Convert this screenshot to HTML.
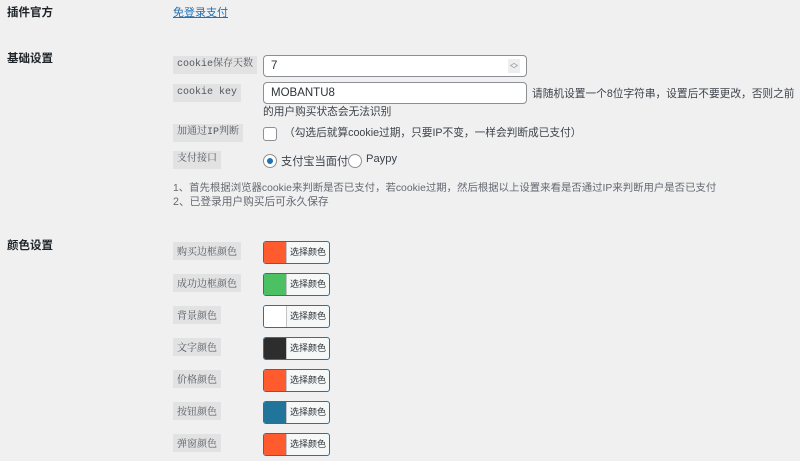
<!DOCTYPE html>
<html><head><meta charset="utf-8"><style>
body{margin:0;width:800px;height:461px;background:#f0f0f1;font-family:"Liberation Sans","Noto Sans CJK SC",sans-serif;color:#3c434a;font-size:10.7px;position:relative;overflow:hidden}
.a{position:absolute;white-space:nowrap}
.h{font-weight:bold;color:#1d2327;font-size:11.5px}
.c{background:#e2e2e3;font-family:"Liberation Mono","Noto Serif CJK SC",monospace;font-size:10px;padding:0 4px;height:18px;line-height:18px;color:#50575e}
.in{background:#fff;border:1px solid #8c8f94;border-radius:4px;line-height:20px;padding-left:7px;box-sizing:border-box;height:22px;color:#2c3338;font-size:11.5px}
.cb{width:67px;height:23px;border:1px solid #2271b1;border-radius:3px;box-sizing:border-box;background:#f6f7f7;overflow:hidden;display:flex}
.cb i{width:22px;height:100%;display:block}
.cb span{flex:1;font-size:9px;line-height:21px;text-align:center;color:#2c3338;border-left:1px solid #c3c4c7}
</style></head><body>
<div class="a h" style="left:7px;top:4px">插件官方</div>
<div class="a" style="left:173px;top:4px;color:#2271b1;text-decoration:underline;font-size:11px">免登录支付</div>
<div class="a h" style="left:7px;top:50px">基础设置</div>
<div class="a c" style="left:173px;top:56px">cookie保存天数</div>
<div class="a in" style="left:263px;top:55px;width:264px">7<span style="position:absolute;right:6px;top:3px;width:12px;height:14px;background:#eee;font-size:8px;line-height:7px;text-align:center;color:#888">︿<br>﹀</span></div>
<div class="a c" style="left:173px;top:84px">cookie key</div>
<div class="a in" style="left:263px;top:82px;width:264px">MOBANTU8</div>
<div class="a" style="left:532px;top:86px">请随机设置一个8位字符串，设置后不要更改，否则之前</div>
<div class="a" style="left:263px;top:104px">的用户购买状态会无法识别</div>
<div class="a c" style="left:173px;top:124px">加通过IP判断</div>
<div class="a" style="left:263px;top:127px;width:12px;height:12px;border:1px solid #8c8f94;border-radius:3px;background:#fff"></div>
<div class="a" style="left:284px;top:125px">（勾选后就算cookie过期，只要IP不变，一样会判断成已支付）</div>
<div class="a c" style="left:173px;top:151px">支付接口</div>
<div class="a" style="left:263px;top:154px;width:12px;height:12px;border:1px solid #8c8f94;border-radius:50%;background:#fff"><div style="width:6px;height:6px;border-radius:50%;background:#2271b1;margin:3px"></div></div>
<div class="a" style="left:281px;top:153px;font-size:11.2px">支付宝当面付</div>
<div class="a" style="left:348px;top:154px;width:12px;height:12px;border:1px solid #8c8f94;border-radius:50%;background:#fff"></div>
<div class="a" style="left:366px;top:153px;font-size:11.2px">Paypy</div>
<div class="a" style="left:173px;top:179px;color:#646970;font-size:10.4px">1、首先根据浏览器cookie来判断是否已支付，若cookie过期，然后根据以上设置来看是否通过IP来判断用户是否已支付</div>
<div class="a" style="left:173px;top:194px;color:#646970">2、已登录用户购买后可永久保存</div>
<div class="a h" style="left:7px;top:237px">颜色设置</div>
<div class="a c" style="left:173px;top:242px;font-family:'Noto Serif CJK SC',serif">购买边框颜色</div>
<div class="a cb" style="left:263px;top:241px"><i style="background:#ff5b2e"></i><span>选择颜色</span></div>
<div class="a c" style="left:173px;top:274px;font-family:'Noto Serif CJK SC',serif">成功边框颜色</div>
<div class="a cb" style="left:263px;top:273px"><i style="background:#4cc164"></i><span>选择颜色</span></div>
<div class="a c" style="left:173px;top:306px;font-family:'Noto Serif CJK SC',serif">背景颜色</div>
<div class="a cb" style="left:263px;top:305px"><i style="background:#fff"></i><span>选择颜色</span></div>
<div class="a c" style="left:173px;top:338px;font-family:'Noto Serif CJK SC',serif">文字颜色</div>
<div class="a cb" style="left:263px;top:337px"><i style="background:#2d2d2d"></i><span>选择颜色</span></div>
<div class="a c" style="left:173px;top:370px;font-family:'Noto Serif CJK SC',serif">价格颜色</div>
<div class="a cb" style="left:263px;top:369px"><i style="background:#ff5b2e"></i><span>选择颜色</span></div>
<div class="a c" style="left:173px;top:402px;font-family:'Noto Serif CJK SC',serif">按钮颜色</div>
<div class="a cb" style="left:263px;top:401px"><i style="background:#21759b"></i><span>选择颜色</span></div>
<div class="a c" style="left:173px;top:434px;font-family:'Noto Serif CJK SC',serif">弹窗颜色</div>
<div class="a cb" style="left:263px;top:433px"><i style="background:#ff5b2e"></i><span>选择颜色</span></div>
</body></html>
